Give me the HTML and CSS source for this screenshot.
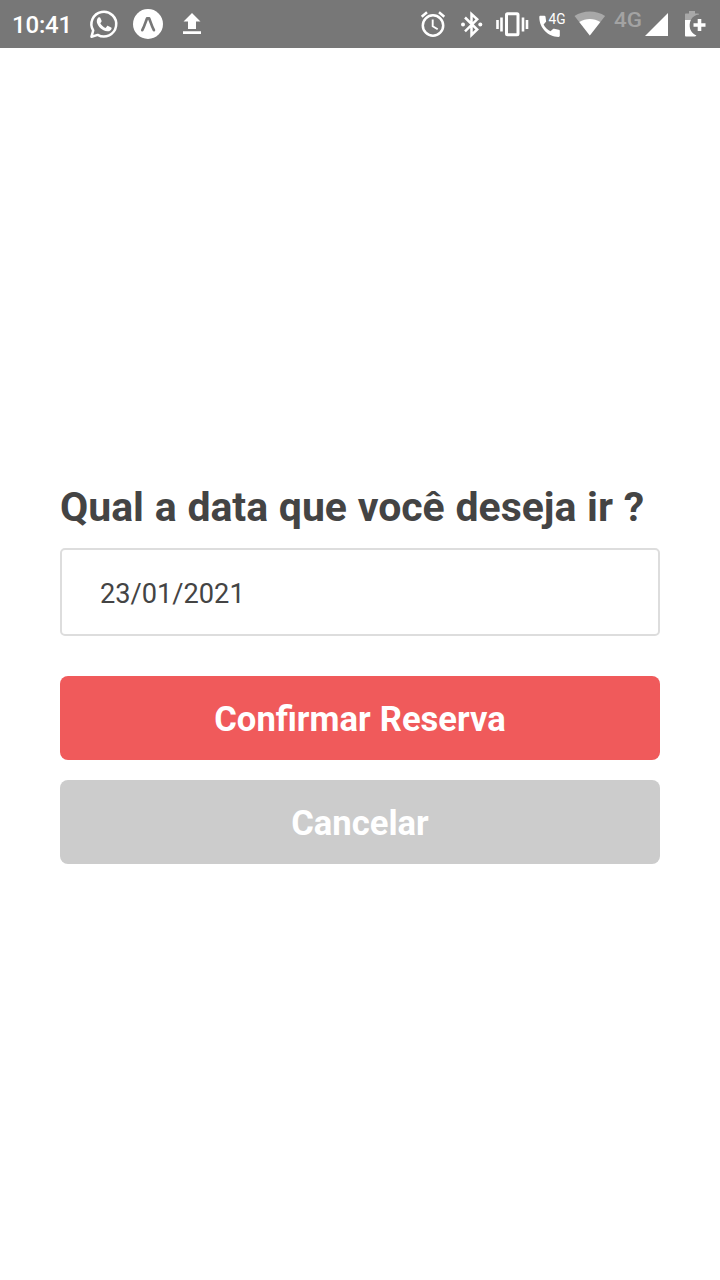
FILE: index.html
```html
<!DOCTYPE html>
<html lang="pt-BR">
<head>
<meta charset="utf-8">
<title>Reserva</title>
<link rel="stylesheet" href="styles.css">
</head>
<body>
<header class="status-bar">
  <div class="status-group">
    <span class="clock">10:41</span>
    <svg class="icon" width="40" height="48" viewBox="84 0 40 48">
      <path d="M91.5 36.7l1.7-6.2a12.4 12.4 0 1 1 4.5 4.4z" fill="none" stroke="#fff" stroke-width="2.5" stroke-linejoin="round"/>
      <path d="M98.3 17.6c.7-.6 1.7-.6 2 .1l1.3 3c.2.6-.1 1-.5 1.5l-.8 1c1.2 2.2 3 3.8 5.3 4.7l1.4-1.7c.3-.4.7-.4 1.1-.2l3 1.4c.6.3.6.6.5 1.1-.4 2.1-2.5 3.1-4.3 2.8-5.4-1-9.2-4.600-10.400-8.900-.4-1.900.2-3.600 1.400-4.800z" fill="#fff"/>
    </svg>
    <svg class="icon" width="48" height="48" viewBox="124 0 48 48">
      <circle cx="148" cy="24" r="15" fill="#fff"/>
      <path d="M142.300 30.200c2-3.700 3.300-8.300 4.700-11.800h2.200c1.400 3.500 2.700 8.100 4.700 11.800" fill="none" stroke="#777" stroke-width="2.700" stroke-linecap="round" stroke-linejoin="round"/>
    </svg>
    <svg class="icon" width="40" height="48" viewBox="172 0 40 48">
      <path d="M192 13l8.500 8.500H196V29h-8v-7.500h-4.500zM183 31.300h18V34h-18z" fill="#fff"/>
    </svg>
  </div>
  <div class="status-group">
    <svg class="icon" width="40" height="48" viewBox="413 0 40 48">
      <g fill="none" stroke="#fff" stroke-width="2.500">
        <circle cx="433" cy="25.500" r="10.200"/>
        <path d="M421.700 16.700l5.300-4.400M439 12.300l5.300 4.400"/>
        <path d="M432.700 19.500v6.700l5 3" stroke-width="1.900"/>
      </g>
    </svg>
    <svg class="icon" width="37" height="48" viewBox="453 0 37 48">
      <path d="M465 17.500l12.200 12-5.700 5.500V14l5.700 5.300-12.200 12" fill="none" stroke="#fff" stroke-width="2.500"/>
      <circle cx="463" cy="24.500" r="2" fill="#fff"/>
      <circle cx="480.300" cy="24.500" r="2" fill="#fff"/>
    </svg>
    <svg class="icon" width="45" height="48" viewBox="490 0 45 48">
      <rect x="506.500" y="13.700" width="11.500" height="21" rx="1" fill="none" stroke="#fff" stroke-width="3"/>
      <path d="M497.500 20v9M501.500 17.500v14M523 17.500v14M527 20v9" stroke="#fff" stroke-width="2.600"/>
    </svg>
    <svg class="icon" width="35" height="48" viewBox="535 0 35 48">
      <path d="M540.500 15.800h3.900c.6 0 1 .4 1.100 1l.6 4.100c.1.500 0 .8-.3 1.100l-2.200 2.400c1.600 3.100 3.800 5.300 6.900 6.900l2.500-2.200c.3-.3.700-.4 1.100-.3l4.600.9c.7.1 1.100.5 1.100 1.100v5c0 .7-.5 1.100-1.200 1.100-10.800 0-19.300-8.800-19.300-19.800 0-.8.500-1.300 1.200-1.300z" fill="#fff"/>
      <text class="badge-4g" x="548.500" y="23.900" textLength="17" lengthAdjust="spacingAndGlyphs">4G</text>
    </svg>
    <svg class="icon" width="40" height="48" viewBox="570 0 40 48">
      <path d="M589.800 35.500L574.500 16c8.500-6 22.100-6 30.600 0z" fill="#a8a8a8"/>
      <path d="M589.800 35.500L579.300 22.100c6.300-4 14.700-4 21 0z" fill="#fff"/>
    </svg>
    <svg class="icon" width="62" height="48" viewBox="610 0 62 48">
      <text class="network-4g" x="614" y="26.500" textLength="28" lengthAdjust="spacingAndGlyphs">4G</text>
      <path d="M668 13v23h-23z" fill="#fff"/>
    </svg>
    <svg class="icon" width="48" height="48" viewBox="672 0 48 48">
      <path d="M685 20v-5.700c0-.5.300-.8.800-.8h3.200V11h6v2.500h3.200c.5 0 .8.300.8.800v.2c-3.600.300-6.500 2.400-8.200 5.500z" fill="#a8a8a8"/>
      <path d="M685 20h5.800c-2.600 5.900-.8 12.800 5.600 15.500-.5.800-1.200 1-2.200 1h-8c-.8 0-1.200-.4-1.200-1.200z" fill="#fff"/>
      <path d="M699.500 19v12M693.500 25h12" stroke="#fff" stroke-width="3.600"/>
    </svg>
  </div>
</header>
<main class="screen">
  <form class="booking">
    <h1 class="title">Qual a data que você deseja ir ?</h1>
    <div class="date-field">23/01/2021</div>
    <button class="button confirm" type="button">Confirmar Reserva</button>
    <button class="button cancel" type="button">Cancelar</button>
  </form>
</main>
</body>
</html>
```
FILE: styles.css
```css
* { box-sizing: border-box; }
body {
  margin: 0;
  height: 1280px;
  display: flex;
  flex-direction: column;
  background: #fff;
  font-family: Roboto, sans-serif;
  color: #444;
}
.status-bar {
  height: 48px;
  flex: none;
  display: flex;
  justify-content: space-between;
  background: #777;
  color: #fff;
}
.status-group { display: flex; align-items: center; }
.clock {
  width: 84px;
  padding: 2px 0 0 12px;
  font-size: 24px;
  font-weight: 500;
  line-height: 28px;
  letter-spacing: -0.2px;
}
.icon { display: block; flex: none; }
.badge-4g { font-size: 15.5px; fill: #fff; }
.network-4g { font-size: 20px; font-weight: 500; fill: #a3a3a3; }
.screen { flex: 1; padding: 433px 60px 0; }
.booking { display: flex; flex-direction: column; }
.title {
  margin: 0 0 14px;
  font-size: 41px;
  font-weight: 700;
  line-height: 53px;
  letter-spacing: -0.05px;
  word-spacing: 0.7px;
  white-space: nowrap;
}
.date-field {
  height: 88px;
  margin-bottom: 40px;
  padding: 3px 38px 0;
  display: flex;
  align-items: center;
  border: 2px solid #ddd;
  border-radius: 5px;
  font-size: 27.2px;
}
.button {
  height: 84px;
  padding: 2px 0 0;
  border: 0;
  border-radius: 8px;
  font: 700 34.6px Roboto, sans-serif;
  color: #fff;
}
.confirm { margin-bottom: 20px; background: #f05a5b; word-spacing: 0.5px; }
.cancel { background: #ccc; }
```
